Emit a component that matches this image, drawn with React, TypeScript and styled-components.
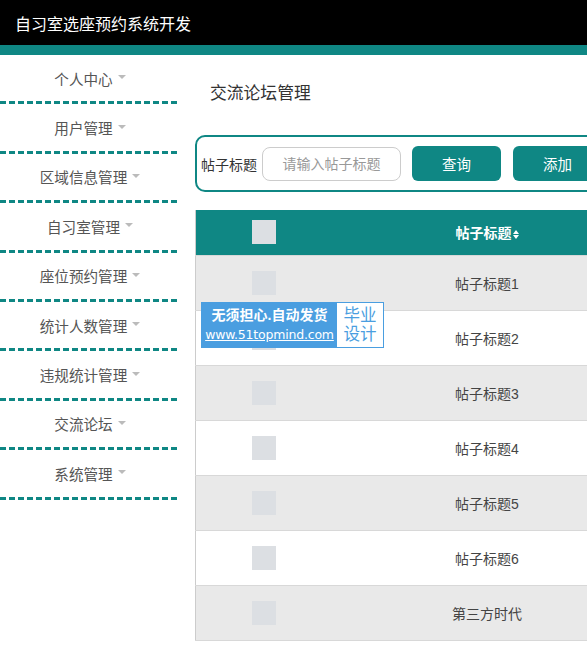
import React from 'react'
import styled, { createGlobalStyle } from 'styled-components'

const TEAL = '#0f8784'

const GlobalStyle = createGlobalStyle`
  html, body {
    margin: 0;
    padding: 0;
    overflow: hidden;
    background: #fff;
    font-family: "Liberation Sans", "Noto Sans CJK SC", sans-serif;
  }
`

const Page = styled.div`
  width: 900px;
  min-height: 652px;
`

const TopBar = styled.header`
  height: 45px;
  background: #000;
  border-bottom: 10px solid ${TEAL};
  display: flex;
  align-items: center;
  padding-left: 15px;
  color: #fff;
  font-size: 16px;
`

const Body = styled.div`
  display: flex;
`

const Sidebar = styled.nav`
  width: 180px;
  flex-shrink: 0;
`

const MenuItem = styled.div`
  height: 49.4px;
  display: flex;
  flex-direction: column;
`

const MenuLabel = styled.div`
  flex: 1;
  display: flex;
  align-items: center;
  justify-content: center;
  gap: 5px;
  font-size: 14.6px;
  color: #555;
`

const Caret = styled.span`
  width: 0;
  height: 0;
  border-left: 4px solid transparent;
  border-right: 4px solid transparent;
  border-top: 4px solid #bbb;
  margin-top: -2px;
`

const Dashes = styled.div`
  height: 3px;
  background-image: repeating-linear-gradient(
    to right,
    ${TEAL} 0,
    ${TEAL} 6px,
    transparent 6px,
    transparent 9px
  );
`

const Main = styled.main`
  flex: 1;
  padding-left: 15px;
  position: relative;
`

const PageTitle = styled.h2`
  margin: 0;
  padding: 25px 0 0 15px;
  height: 53px;
  box-sizing: border-box;
  font-size: 16.8px;
  font-weight: normal;
  color: #333;
`

const SearchBox = styled.div`
  margin-top: 27px;
  width: 520px;
  height: 57px;
  box-sizing: border-box;
  border: 2px solid ${TEAL};
  border-radius: 10px;
  display: flex;
  align-items: center;
  padding-left: 4px;
`

const SearchLabel = styled.label`
  font-size: 14px;
  color: #333;
  margin-right: 5px;
`

const SearchInput = styled.input`
  width: 139px;
  height: 34px;
  box-sizing: border-box;
  border: 1px solid #ccc;
  border-radius: 8px;
  font-size: 14px;
  font-family: inherit;
  text-align: center;
  outline: none;
  margin-right: 11px;
  &::placeholder {
    color: #999;
  }
`

const ActionButton = styled.button`
  width: 89px;
  height: 35px;
  flex-shrink: 0;
  border: none;
  border-radius: 6px;
  background: ${TEAL};
  color: #fff;
  font-size: 14.5px;
  font-family: inherit;
  margin-right: 12px;
  cursor: pointer;
`

const Table = styled.table`
  margin-top: 18px;
  border-collapse: collapse;
  table-layout: fixed;
  width: 520px;
  border-left: 1px solid #ccc;
  font-size: 14px;
  color: #444;
`

const HeadRow = styled.tr`
  height: 45px;
  background: ${TEAL};
  color: #fff;
`

const HeadCell = styled.th<{ $w?: number }>`
  width: ${p => (p.$w ? `${p.$w}px` : 'auto')};
  font-weight: bold;
  text-align: center;
  padding: 0;
`

const Row = styled.tr<{ $odd: boolean }>`
  height: 55px;
  background: ${p => (p.$odd ? '#e9e9e9' : '#fff')};
  border-top: 1px solid #d8d8d8;
  &:last-child {
    border-bottom: 1px solid #d8d8d8;
  }
`

const Cell = styled.td`
  text-align: center;
  padding: 0;
`

const Check = styled.span`
  display: inline-block;
  width: 24px;
  height: 24px;
  background: #dcdfe3;
  vertical-align: middle;
`

const SortIcon = styled.span`
  display: inline-flex;
  flex-direction: column;
  gap: 1px;
  margin-left: 1px;
  vertical-align: middle;
  &::before,
  &::after {
    content: '';
    width: 0;
    height: 0;
    border-left: 3.5px solid transparent;
    border-right: 3.5px solid transparent;
  }
  &::before {
    border-bottom: 4px solid #fff;
  }
  &::after {
    border-top: 4px solid #fff;
  }
`

const Badge = styled.div`
  position: absolute;
  left: 21px;
  top: 247px;
  width: 183px;
  height: 46px;
  background: #4a9ee0;
  display: flex;
  align-items: center;
  padding: 1px;
  box-sizing: border-box;
`

const BadgeText = styled.div`
  flex: 1;
  color: #fff;
  display: flex;
  flex-direction: column;
  align-items: center;
  line-height: 20px;
`

const BadgeLine = styled.span`
  font-size: 14px;
  font-weight: bold;
`

const BadgeUrl = styled.span`
  font-size: 12.5px;
  font-family: "DejaVu Sans", "Liberation Sans", sans-serif;
  text-decoration: underline;
  letter-spacing: -0.2px;
`

const BadgeTag = styled.div`
  width: 46px;
  height: 44px;
  background: #fff;
  color: #4a9ee0;
  font-size: 16.5px;
  display: flex;
  flex-direction: column;
  align-items: center;
  justify-content: center;
  line-height: 19px;
`

const menus = ['个人中心', '用户管理', '区域信息管理', '自习室管理', '座位预约管理', '统计人数管理', '违规统计管理', '交流论坛', '系统管理']
const posts = ['帖子标题1', '帖子标题2', '帖子标题3', '帖子标题4', '帖子标题5', '帖子标题6', '第三方时代']

export default function App() {
  return (
    <>
      <GlobalStyle />
      <Page>
        <TopBar>自习室选座预约系统开发</TopBar>
        <Body>
          <Sidebar>
            {menus.map(m => (
              <MenuItem key={m}>
                <MenuLabel>
                  {m}
                  <Caret />
                </MenuLabel>
                <Dashes />
              </MenuItem>
            ))}
          </Sidebar>
          <Main>
            <PageTitle>交流论坛管理</PageTitle>
            <SearchBox>
              <SearchLabel>帖子标题</SearchLabel>
              <SearchInput placeholder="请输入帖子标题" />
              <ActionButton>查询</ActionButton>
              <ActionButton>添加</ActionButton>
            </SearchBox>
            <Table>
              <thead>
                <HeadRow>
                  <HeadCell $w={136}><Check /></HeadCell>
                  <HeadCell $w={310}>帖子标题<SortIcon /></HeadCell>
                  <HeadCell />
                </HeadRow>
              </thead>
              <tbody>
                {posts.map((p, i) => (
                  <Row key={p} $odd={i % 2 === 0}>
                    <Cell><Check /></Cell>
                    <Cell>{p}</Cell>
                    <Cell />
                  </Row>
                ))}
              </tbody>
            </Table>
            <Badge>
              <BadgeText>
                <BadgeLine>无须担心.自动发货</BadgeLine>
                <BadgeUrl>www.51topmind.com</BadgeUrl>
              </BadgeText>
              <BadgeTag>
                <span>毕业</span>
                <span>设计</span>
              </BadgeTag>
            </Badge>
          </Main>
        </Body>
      </Page>
    </>
  )
}
